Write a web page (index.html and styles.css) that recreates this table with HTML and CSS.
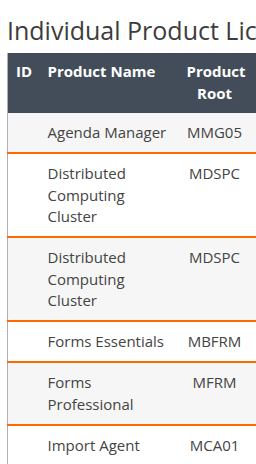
FILE: index.html
```html
<!DOCTYPE html>
<html>
<head>
<meta charset="utf-8">
<link rel="stylesheet" href="styles.css">
</head>
<body>
<h2 class="title">Individual Product Licenses</h2>
<table class="products">
  <colgroup>
    <col class="c-id"><col class="c-name"><col class="c-root"><col class="c-more"><col class="c-more">
  </colgroup>
  <thead>
    <tr><th>ID</th><th>Product Name</th><th class="center">Product Root</th><th class="center">Version</th><th class="center">Price</th></tr>
  </thead>
  <tbody>
    <tr><td></td><td>Agenda Manager</td><td class="center">MMG05</td><td></td><td></td></tr>
    <tr><td></td><td>Distributed Computing Cluster</td><td class="center">MDSPC</td><td></td><td></td></tr>
    <tr><td></td><td>Distributed Computing Cluster</td><td class="center">MDSPC</td><td></td><td></td></tr>
    <tr><td></td><td>Forms Essentials</td><td class="center">MBFRM</td><td></td><td></td></tr>
    <tr><td></td><td>Forms Professional</td><td class="center">MFRM</td><td></td><td></td></tr>
    <tr><td></td><td>Import Agent</td><td class="center">MCA01</td><td></td><td></td></tr>
  </tbody>
</table>
</body>
</html>
```
FILE: styles.css
```css
html, body {
  overflow: hidden;
}
body {
  margin: 0;
  padding: 0 7px;
  font-family: "Open Sans", sans-serif;
  color: #444;
  background: #fff;
  width: 600px;
}
.title {
  margin: 0 0 8px;
  padding-top: 15px;
  font-size: 25px;
  font-weight: 400;
  line-height: 30px;
  color: #3c3c3c;
  white-space: nowrap;
}
.products {
  border-collapse: collapse;
  table-layout: fixed;
  width: 483px;
  border-left: 1px solid #aab0b6;
  font-size: 15px;
  line-height: 21.5px;
}
.c-id { width: 32px; }
.c-name { width: 139px; }
.c-root { width: 72px; }
.c-more { width: 120px; }
.products thead th {
  background: #434d5a;
  color: #fff;
  font-weight: 700;
  text-align: left;
  vertical-align: top;
  padding: 8px 8px 9px;
}
.products th.center, .products td.center { text-align: center; }
.products td {
  vertical-align: top;
  padding: 9px 8px 8.5px;
  border-bottom: 2px solid #ff6a00;
}
.products tbody tr:nth-child(odd) td { background: #f6f6f6; }
.products tbody tr:nth-child(even) td { background: #fff; }
```
